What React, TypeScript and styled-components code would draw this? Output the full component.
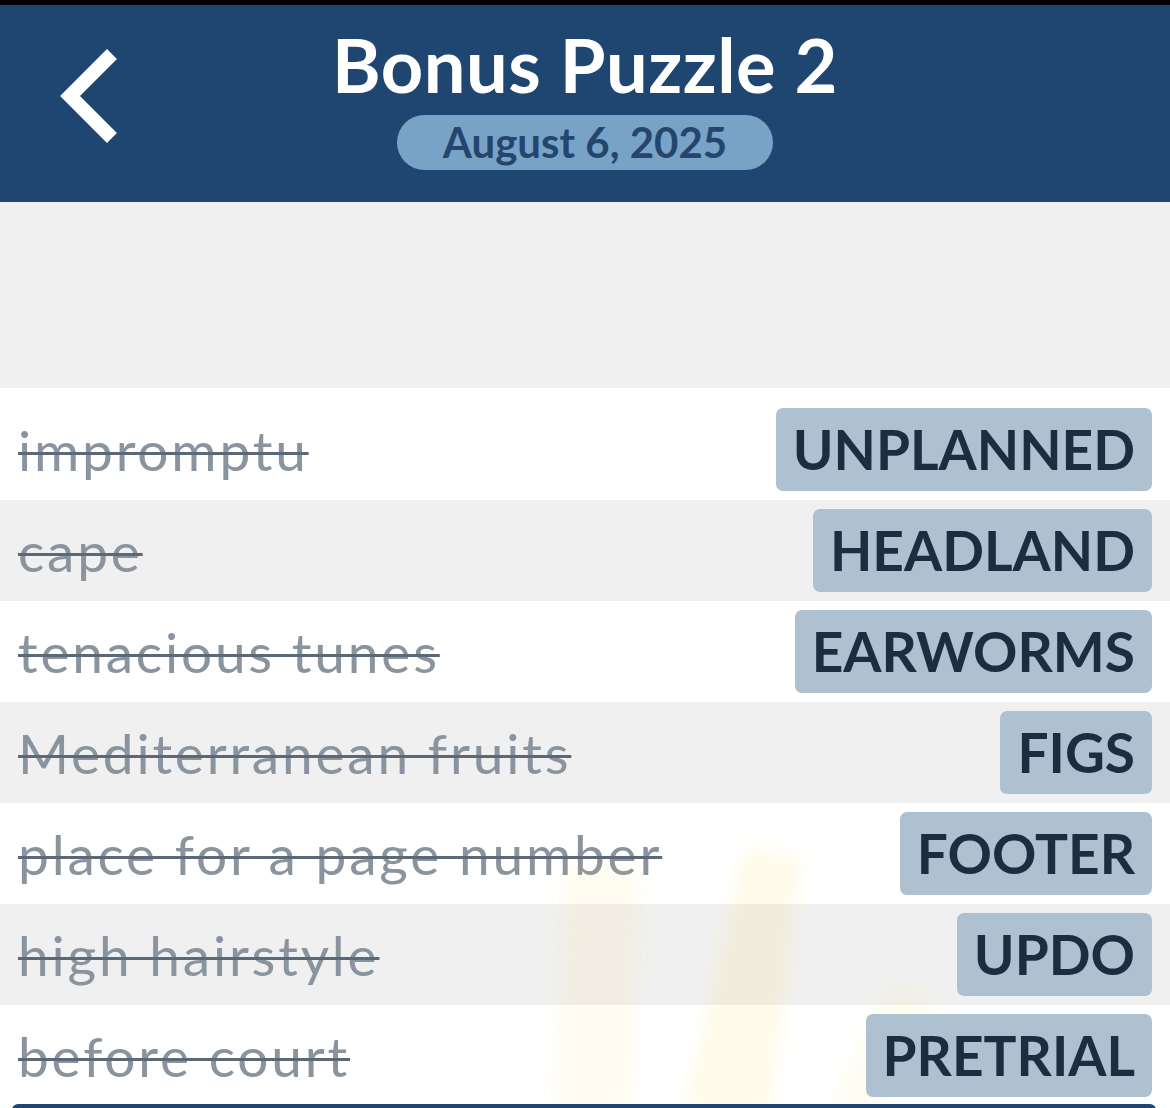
import React from "react";
import styled, { createGlobalStyle } from "styled-components";

const GlobalStyle = createGlobalStyle`
  body {
    margin: 0;
    background: #f0f0f0;
    font-family: "Lato", "Noto Sans", sans-serif;
  }
`;

type Entry = { clue: string; answer: string };

const entries: Entry[] = [
  { clue: "impromptu", answer: "UNPLANNED" },
  { clue: "cape", answer: "HEADLAND" },
  { clue: "tenacious tunes", answer: "EARWORMS" },
  { clue: "Mediterranean fruits", answer: "FIGS" },
  { clue: "place for a page number", answer: "FOOTER" },
  { clue: "high hairstyle", answer: "UPDO" },
  { clue: "before court", answer: "PRETRIAL" },
];

const BackIcon = () => (
  <svg width="80" height="115" viewBox="0 0 80 115">
    <polyline
      points="57,19 20,56 57,93"
      fill="none"
      stroke="#ffffff"
      strokeWidth="14"
      strokeLinecap="square"
      strokeLinejoin="miter"
    />
  </svg>
);

const Rays = () => (
  <svg width="1170" height="720" viewBox="0 0 1170 720">
    <defs>
      <filter id="soft" x="-20%" y="-20%" width="140%" height="140%">
        <feGaussianBlur stdDeviation="8" />
      </filter>
    </defs>
    <g filter="url(#soft)" fill="#ffd54a">
      <polygon points="565,480 640,480 630,720 555,720" opacity="0.09" />
      <polygon points="745,460 800,470 770,720 685,720" opacity="0.12" />
      <polygon points="890,600 935,610 880,720 830,720" opacity="0.08" />
    </g>
  </svg>
);

export default function App() {
  return (
    <>
      <GlobalStyle />
      <Page>
        <TopStrip />
        <Header>
          <BackButton aria-label="Back">
            <BackIcon />
          </BackButton>
          <TitleBlock>
            <Title>Bonus Puzzle 2</Title>
            <DatePill>August 6, 2025</DatePill>
          </TitleBlock>
          <div />
        </Header>
        <Spacer />
        <List>
          <RayLayer>
            <Rays />
          </RayLayer>
          {entries.map((e, i) => (
            <Row key={e.clue} $shaded={i % 2 === 1}>
              <Clue>{e.clue}</Clue>
              <Answer>{e.answer}</Answer>
            </Row>
          ))}
          <BottomBar />
        </List>
      </Page>
    </>
  );
}

const Page = styled.div`
  width: 1170px;
  height: 1108px;
  overflow: hidden;
  display: flex;
  flex-direction: column;
`;

const TopStrip = styled.div`
  height: 5px;
  background: #000000;
  flex-shrink: 0;
`;

const Header = styled.header`
  height: 197px;
  flex-shrink: 0;
  background: #1f4670;
  display: grid;
  grid-template-columns: 1fr auto 1fr;
  align-items: start;
`;

const BackButton = styled.button`
  justify-self: start;
  margin: 35px 0 0 50px;
  padding: 0;
  border: 0;
  background: none;
  display: flex;
`;

const TitleBlock = styled.div`
  display: flex;
  flex-direction: column;
  align-items: center;
  padding-top: 16px;
`;

const Title = styled.h1`
  margin: 0;
  color: #ffffff;
  font-family: "Lato", sans-serif;
  font-weight: 700;
  font-size: 74px;
  line-height: 88px;
  letter-spacing: 0.5px;
`;

const DatePill = styled.div`
  margin-top: 6px;
  width: 376px;
  height: 55px;
  border-radius: 28px;
  background: #78a2c6;
  color: #24466c;
  font-family: "Lato", sans-serif;
  font-weight: 700;
  font-size: 42px;
  line-height: 54px;
  text-align: center;
`;

const Spacer = styled.div`
  height: 186px;
  flex-shrink: 0;
  background: #f0f0f0;
`;

const List = styled.div`
  position: relative;
  flex: 1;
  background: #ffffff;
  padding-top: 11px;
`;

const RayLayer = styled.div`
  position: absolute;
  inset: 0;
  pointer-events: none;
  z-index: 1;
`;

const Row = styled.div<{ $shaded: boolean }>`
  height: 101px;
  box-sizing: border-box;
  display: flex;
  align-items: center;
  justify-content: space-between;
  padding: 0 18px;
  background: ${({ $shaded }) => ($shaded ? "#f0f0f0" : "#ffffff")};
`;

const Clue = styled.span`
  color: #8a949f;
  font-family: "Lato", sans-serif;
  font-size: 55px;
  font-weight: 400;
  letter-spacing: 2.8px;
  text-decoration: line-through;
  text-decoration-color: #5b6878;
  text-decoration-thickness: 3px;
  white-space: nowrap;
`;

const Answer = styled.span`
  position: relative;
  z-index: 2;
  height: 83px;
  box-sizing: border-box;
  padding: 0 17px;
  border-radius: 7px;
  background: #adc1d0;
  color: #1b2d40;
  font-family: "Lato", sans-serif;
  font-weight: 700;
  font-size: 55px;
  line-height: 83px;
  letter-spacing: 0;
  white-space: nowrap;
`;

const BottomBar = styled.div`
  position: relative;
  z-index: 2;
  margin: -2px 14px 0 12px;
  height: 20px;
  border-radius: 6px 6px 0 0;
  background: #1f4670;
`;
